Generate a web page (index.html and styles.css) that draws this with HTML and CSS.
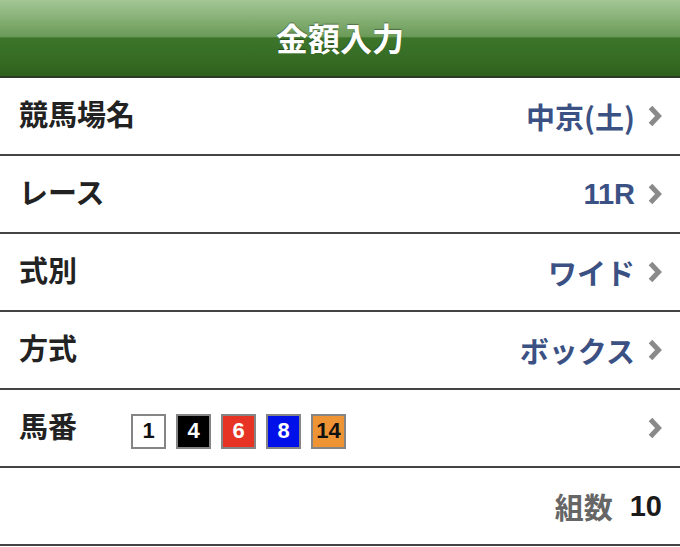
FILE: index.html
```html
<!DOCTYPE html>
<html lang="ja">
<head>
<meta charset="utf-8">
<link rel="stylesheet" href="styles.css">
</head>
<body>
<header class="bar"><h1 class="title">金額入力</h1></header>
<ul class="list">
  <li class="row"><span class="label">競馬場名</span><span class="value">中京(土)</span><span class="chev"><svg width="16" height="24" viewBox="0 0 16 24"><path d="M3.5 3.5 L11.5 12 L3.5 20.5" fill="none" stroke="#8a8a8a" stroke-width="5"/></svg></span></li>
  <li class="row"><span class="label">レース</span><span class="value num">11R</span><span class="chev"><svg width="16" height="24" viewBox="0 0 16 24"><path d="M3.5 3.5 L11.5 12 L3.5 20.5" fill="none" stroke="#8a8a8a" stroke-width="5"/></svg></span></li>
  <li class="row"><span class="label">式別</span><span class="value">ワイド</span><span class="chev"><svg width="16" height="24" viewBox="0 0 16 24"><path d="M3.5 3.5 L11.5 12 L3.5 20.5" fill="none" stroke="#8a8a8a" stroke-width="5"/></svg></span></li>
  <li class="row"><span class="label">方式</span><span class="value">ボックス</span><span class="chev"><svg width="16" height="24" viewBox="0 0 16 24"><path d="M3.5 3.5 L11.5 12 L3.5 20.5" fill="none" stroke="#8a8a8a" stroke-width="5"/></svg></span></li>
  <li class="row"><span class="label">馬番</span>
    <span class="badges">
      <span class="badge b-white">1</span>
      <span class="badge b-black">4</span>
      <span class="badge b-red">6</span>
      <span class="badge b-blue">8</span>
      <span class="badge b-orange">14</span>
    </span>
    <span class="chev"><svg width="16" height="24" viewBox="0 0 16 24"><path d="M3.5 3.5 L11.5 12 L3.5 20.5" fill="none" stroke="#8a8a8a" stroke-width="5"/></svg></span></li>
  <li class="row total"><span class="tlabel">組数</span><span class="tnum">10</span></li>
</ul>
</body>
</html>
```
FILE: styles.css
```css
* { box-sizing: border-box; }
html, body { margin: 0; padding: 0; background: #fff; }
body { font-family: "Noto Sans CJK JP", "Liberation Sans", sans-serif; width: 680px; height: 547px; overflow: hidden; }
.bar {
  height: 78px;
  background: linear-gradient(to bottom, #a3c694 0%, #86b075 25%, #6a9a58 48%, #3d752b 50%, #356b23 80%, #2f621e 97%);
  border-bottom: 2px solid #2b3b25;
  display: flex; align-items: center; justify-content: center;
}
.title {
  margin: 0; color: #fff; font-size: 32px; font-weight: 700;
  text-shadow: 0 -1px 1px rgba(0,0,0,0.35);
  padding-bottom: 2px;
}
.list { list-style: none; margin: 0; padding: 0; }
.row {
  height: 78px; border-bottom: 2px solid #444;
  display: flex; align-items: center;
  padding: 0 17px 0 19px;
}
.label { font-size: 29px; font-weight: 700; color: #222; margin-top: -6px; }
.value { margin-left: auto; font-size: 29px; font-weight: 700; color: #3b5184; margin-right: 12px; }
.value.num { font-family: "Liberation Sans", sans-serif; font-size: 29px; }
.chev { display: flex; align-items: center; }
.badges { display: flex; gap: 10px; margin-left: 54px; margin-right: auto; margin-top: 6px; }
.badge {
  width: 35px; height: 35px; border: 2px solid #858585;
  display: flex; align-items: center; justify-content: center;
  font-family: "Liberation Sans", sans-serif; font-weight: 700; font-size: 22px;
}
.b-white { background: #fff; color: #111; }
.b-black { background: #000; color: #fff; }
.b-red { background: #e63323; color: #fff; }
.b-blue { background: #0010e8; color: #fff; }
.b-orange { background: #ef9435; color: #111; }
.total { justify-content: flex-end; padding-right: 18px; }
.tlabel { font-size: 29px; font-weight: 700; color: #666; margin-right: 17px; }
.tnum { font-family: "Liberation Sans", sans-serif; font-size: 29px; font-weight: 700; color: #1a1a1a; }
```
